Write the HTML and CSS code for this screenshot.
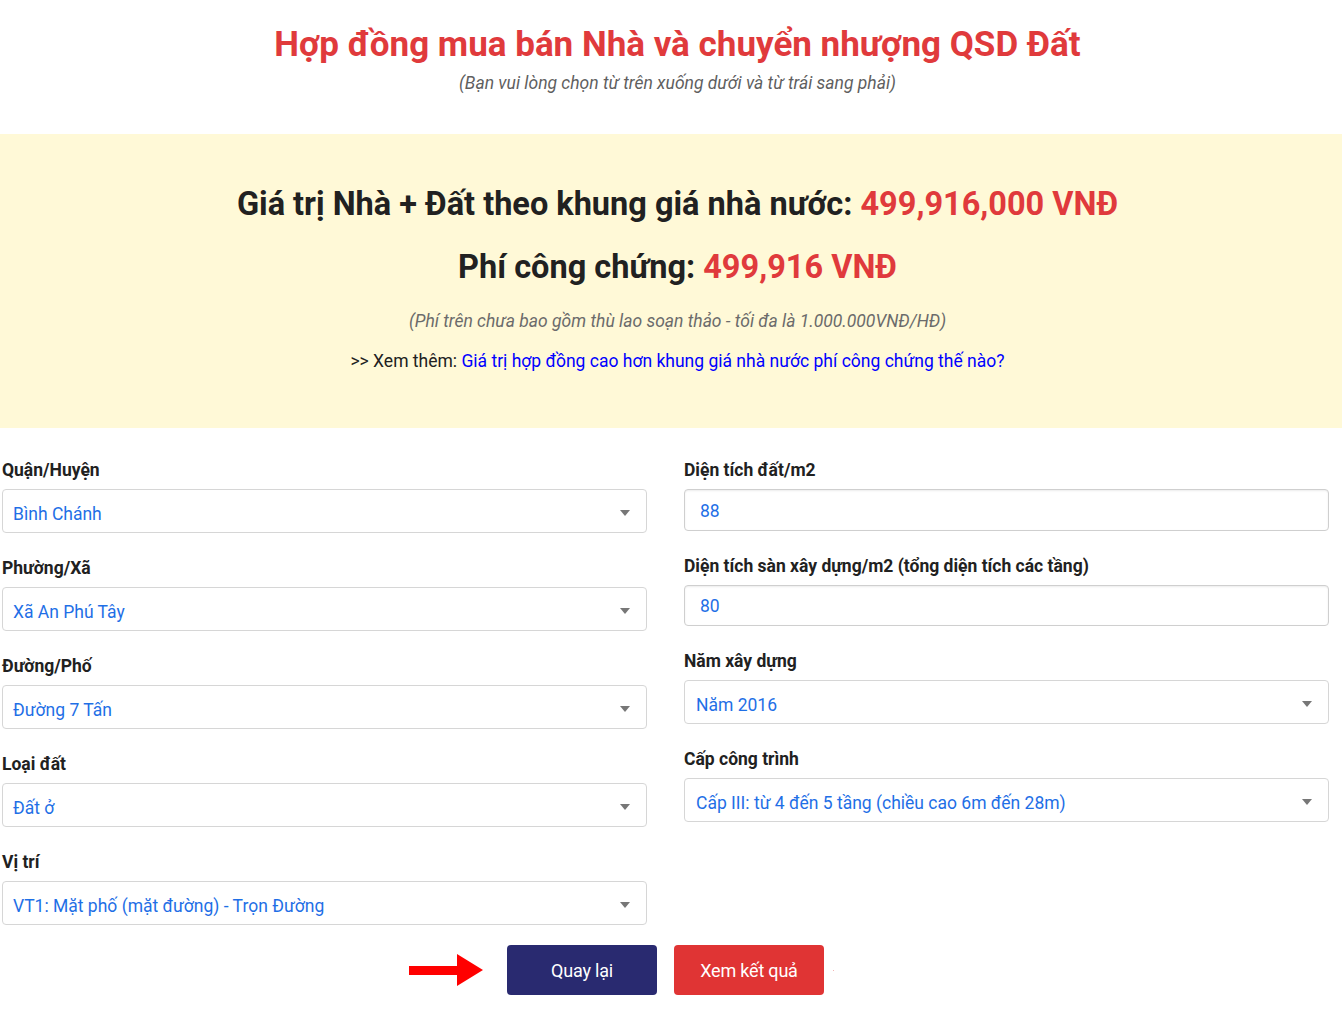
FILE: index.html
```html
<!DOCTYPE html>
<html lang="vi">
<head>
<meta charset="utf-8">
<title>Hợp đồng mua bán Nhà và chuyển nhượng QSD Đất</title>
<link rel="stylesheet" href="styles.css">
</head>
<body>
<header class="page-head">
  <h1 class="title">Hợp đồng mua bán Nhà và chuyển nhượng QSD Đất</h1>
  <p class="subtitle">(Bạn vui lòng chọn từ trên xuống dưới và từ trái sang phải)</p>
</header>

<section class="result">
  <h2 class="result-line">Giá trị Nhà + Đất theo khung giá nhà nước: <span class="money">499,916,000 VNĐ</span></h2>
  <h2 class="result-line">Phí công chứng: <span class="money">499,916 VNĐ</span></h2>
  <p class="note">(Phí trên chưa bao gồm thù lao soạn thảo - tối đa là 1.000.000VNĐ/HĐ)</p>
  <p class="more">&gt;&gt; Xem thêm: <a class="more-link" href="#">Giá trị hợp đồng cao hơn khung giá nhà nước phí công chứng thế nào?</a></p>
</section>

<form class="form">
  <div class="col">
    <div class="field">
      <label class="label">Quận/Huyện</label>
      <div class="select"><span>Bình Chánh</span><i class="caret"></i></div>
    </div>
    <div class="field">
      <label class="label">Phường/Xã</label>
      <div class="select"><span>Xã An Phú Tây</span><i class="caret"></i></div>
    </div>
    <div class="field">
      <label class="label">Đường/Phố</label>
      <div class="select"><span>Đường 7 Tấn</span><i class="caret"></i></div>
    </div>
    <div class="field">
      <label class="label">Loại đất</label>
      <div class="select"><span>Đất ở</span><i class="caret"></i></div>
    </div>
    <div class="field">
      <label class="label">Vị trí</label>
      <div class="select"><span>VT1: Mặt phố (mặt đường) - Trọn Đường</span><i class="caret"></i></div>
    </div>
  </div>
  <div class="col col-right">
    <div class="field">
      <label class="label">Diện tích đất/m2</label>
      <div class="input">88</div>
    </div>
    <div class="field">
      <label class="label">Diện tích sàn xây dựng/m2 (tổng diện tích các tầng)</label>
      <div class="input input-sm">80</div>
    </div>
    <div class="field">
      <label class="label">Năm xây dựng</label>
      <div class="select"><span>Năm 2016</span><i class="caret"></i></div>
    </div>
    <div class="field">
      <label class="label">Cấp công trình</label>
      <div class="select"><span>Cấp III: từ 4 đến 5 tầng (chiều cao 6m đến 28m)</span><i class="caret"></i></div>
    </div>
  </div>
  <div class="actions">
    <div class="btn-wrap">
      <svg class="arrow" width="74" height="32" viewBox="0 0 74 32"><rect x="0" y="12" width="50" height="9" fill="#ff0000"/><polygon points="48,0 74,16 48,32" fill="#ff0000"/></svg>
      <button type="button" class="btn btn-back">Quay lại</button>
      <button type="button" class="btn btn-go">Xem kết quả</button>
      <span class="dot"></span>
    </div>
  </div>
</form>
</body>
</html>
```

FILE: styles.css
```css
* { box-sizing: border-box; }
html, body { margin: 0; padding: 0; background: #fff; }
body {
  font-family: Roboto, "Noto Sans", "Liberation Sans", sans-serif;
  color: #212529;
  width: 1342px;
}
.page-head {
  padding: 21px 0 0 13px;
  height: 134px;
  text-align: center;
}
.title {
  margin: 0;
  font-size: 35px;
  line-height: 48px;
  font-weight: 700;
  color: #e03a3c;
}
.subtitle {
  margin: 2px 0 0;
  font-size: 17.5px;
  line-height: 24px;
  font-style: italic;
  color: #5f5f5f;
}
.result {
  background: #fff9d7;
  height: 294px;
  padding: 49px 0 0 13px;
  text-align: center;
}
.result-line {
  margin: 0 0 21px;
  font-size: 32.5px;
  line-height: 42px;
  font-weight: 700;
  color: #212121;
}
.money { color: #e03a3c; }
.note {
  margin: 0;
  font-size: 17.5px;
  line-height: 24px;
  font-style: italic;
  color: #6b6b6b;
}
.more {
  margin: 16px 0 0;
  font-size: 17.5px;
  line-height: 24px;
  color: #212121;
}
.more-link { color: #0000ff; text-decoration: none; }
.form {
  display: grid;
  grid-template-columns: 645px 645px;
  column-gap: 37px;
  padding: 32px 13px 0 2px;
}
.col { display: flex; flex-direction: column; }
.field { margin-bottom: 25px; }
.field:last-child { margin-bottom: 0; }
.label {
  display: block;
  font-size: 17.5px;
  line-height: 20px;
  font-weight: 700;
  color: #212121;
  margin-bottom: 9px;
}
.select, .input {
  display: flex;
  align-items: center;
  height: 44px;
  border: 1px solid #d6d6d6;
  border-radius: 4px;
  background: #fff;
  padding: 0 10px;
  font-size: 17.5px;
  color: #1f6fe6;
}
.select span { flex: 1; padding-top: 5px; }
.caret {
  width: 0; height: 0;
  border-left: 5px solid transparent;
  border-right: 5px solid transparent;
  border-top: 6px solid #777;
  margin-right: 6px;
  margin-top: 4px;
}
.col-right .select { padding-left: 11px; }
.input {
  height: 42px;
  padding-left: 15px;
  padding-top: 1px;
  box-shadow: inset 0 1px 2px rgba(0,0,0,0.08);
  border-color: #cfcfcf;
}
.input-sm { height: 41px; }
.actions {
  grid-column: 1 / 3;
  display: flex;
  justify-content: center;
  padding-top: 20px;
}
.btn-wrap {
  position: relative;
  display: flex;
  gap: 17px;
}
.arrow {
  position: absolute;
  left: -98px;
  top: 9px;
}
.btn {
  width: 150px;
  height: 50px;
  border: 0;
  border-radius: 4px;
  color: #fff;
  font-family: Roboto, "Noto Sans", sans-serif;
  font-size: 18px;
  letter-spacing: -0.2px;
}
.btn-back { background: #292a70; }
.btn-go { background: #e03434; }
.dot {
  position: absolute;
  right: -10px;
  top: 25px;
  width: 1px;
  height: 1px;
  background: #f3b4b4;
}
```
